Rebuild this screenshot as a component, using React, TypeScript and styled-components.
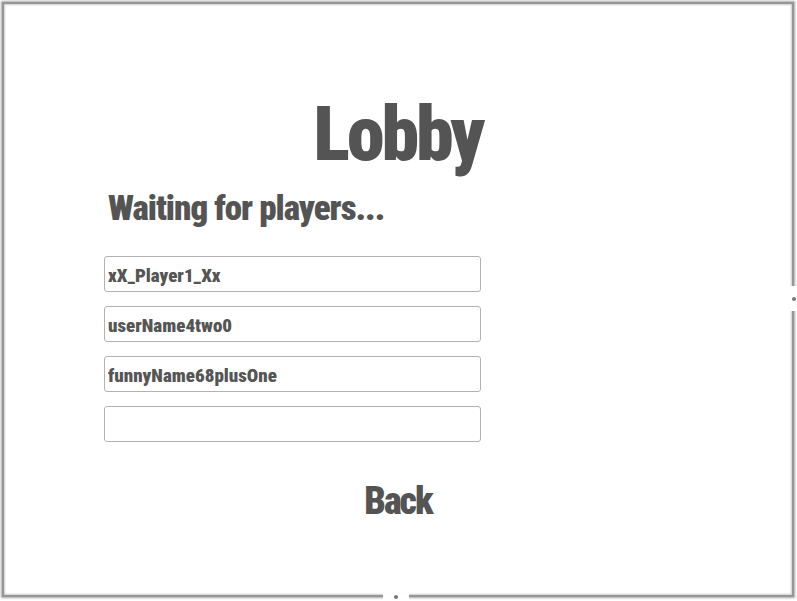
import React from 'react';
import styled, { createGlobalStyle } from 'styled-components';

const GlobalStyle = createGlobalStyle`
	html, body {
		margin: 0;
		padding: 0;
		background: #ffffff;
	}
	body {
		width: 797px;
		height: 601px;
		overflow: hidden;
		font-family: Roboto, 'Liberation Sans', sans-serif;
	}
`;

const Frame = styled('div')`
	position: relative;
	box-sizing: border-box;
	margin: 2px 0 0 2px;
	width: 792px;
	height: 595px;
	border: 2px solid #969696;
	box-shadow: 0 0 2px 1px rgba(0, 0, 0, 0.35), inset 0 0 2px 1px rgba(0, 0, 0, 0.2);
	background: #ffffff;
	display: flex;
	flex-direction: column;
	padding-top: 92px;
`;

const Heading = styled('h1')<{ size: number; spacing: number; align?: string }>`
	margin: 0;
	font-family: Roboto, 'Liberation Sans', sans-serif;
	font-weight: 900;
	font-stretch: 75%;
	font-size: ${({ size }) => size}px;
	letter-spacing: ${({ spacing }) => spacing}px;
	line-height: 1;
	color: #545454;
	text-align: ${({ align }) => align || 'left'};
`;

const Subtitle = styled(Heading)`
	margin-left: 4px;
`;

const PlayersSection = styled('section')`
	display: flex;
	flex-direction: column;
	padding-left: 100px;
	margin-top: 19px;
`;

const PlayerList = styled('div')`
	display: flex;
	flex-direction: column;
	gap: 14px;
	margin-top: 30px;
	width: 377px;
`;

const PlayerSlot = styled('input')`
	box-sizing: border-box;
	height: 36px;
	width: 100%;
	margin: 0;
	padding: 3px 3px 0;
	border: 1px solid #b2b2b2;
	border-radius: 3px;
	background: #ffffff;
	font-family: Roboto, 'Liberation Sans', sans-serif;
	font-weight: 900;
	font-stretch: 75%;
	font-size: 19px;
	color: #555555;
	outline: none;
`;

const BackButton = styled('button')`
	align-self: center;
	margin: 40px 0 0 0;
	padding: 0;
	border: none;
	background: none;
	cursor: pointer;
	font-family: Roboto, 'Liberation Sans', sans-serif;
	font-weight: 900;
	font-stretch: 75%;
	font-size: 38px;
	letter-spacing: -2px;
	line-height: 1;
	color: #545454;
`;

const Handle = styled('div')<{ side: 'right' | 'bottom' }>`
	position: absolute;
	background: #ffffff;
	display: flex;
	align-items: center;
	justify-content: center;
	${({ side }) =>
		side === 'right'
			? `right: -6px; top: 282px; width: 8px; height: 25px;`
			: `bottom: -6px; left: 379px; width: 26px; height: 8px;`}

	&::after {
		content: '';
		width: 4px;
		height: 4px;
		border-radius: 50%;
		background: #777777;
	}
`;

const players = ['xX_Player1_Xx', 'userName4two0', 'funnyName68plusOne', ''];

export default function App() {
	return (
		<>
			<GlobalStyle />
			<Frame>
				<Heading size={76} spacing={-3} align="center">
					Lobby
				</Heading>
				<PlayersSection>
					<Subtitle as="h2" size={35} spacing={-1}>
						Waiting for players...
					</Subtitle>
					<PlayerList>
						{players.map((name, i) => (
							<PlayerSlot key={i} defaultValue={name} readOnly />
						))}
					</PlayerList>
				</PlayersSection>
				<BackButton type="button">Back</BackButton>
				<Handle side="right" />
				<Handle side="bottom" />
			</Frame>
		</>
	);
}
